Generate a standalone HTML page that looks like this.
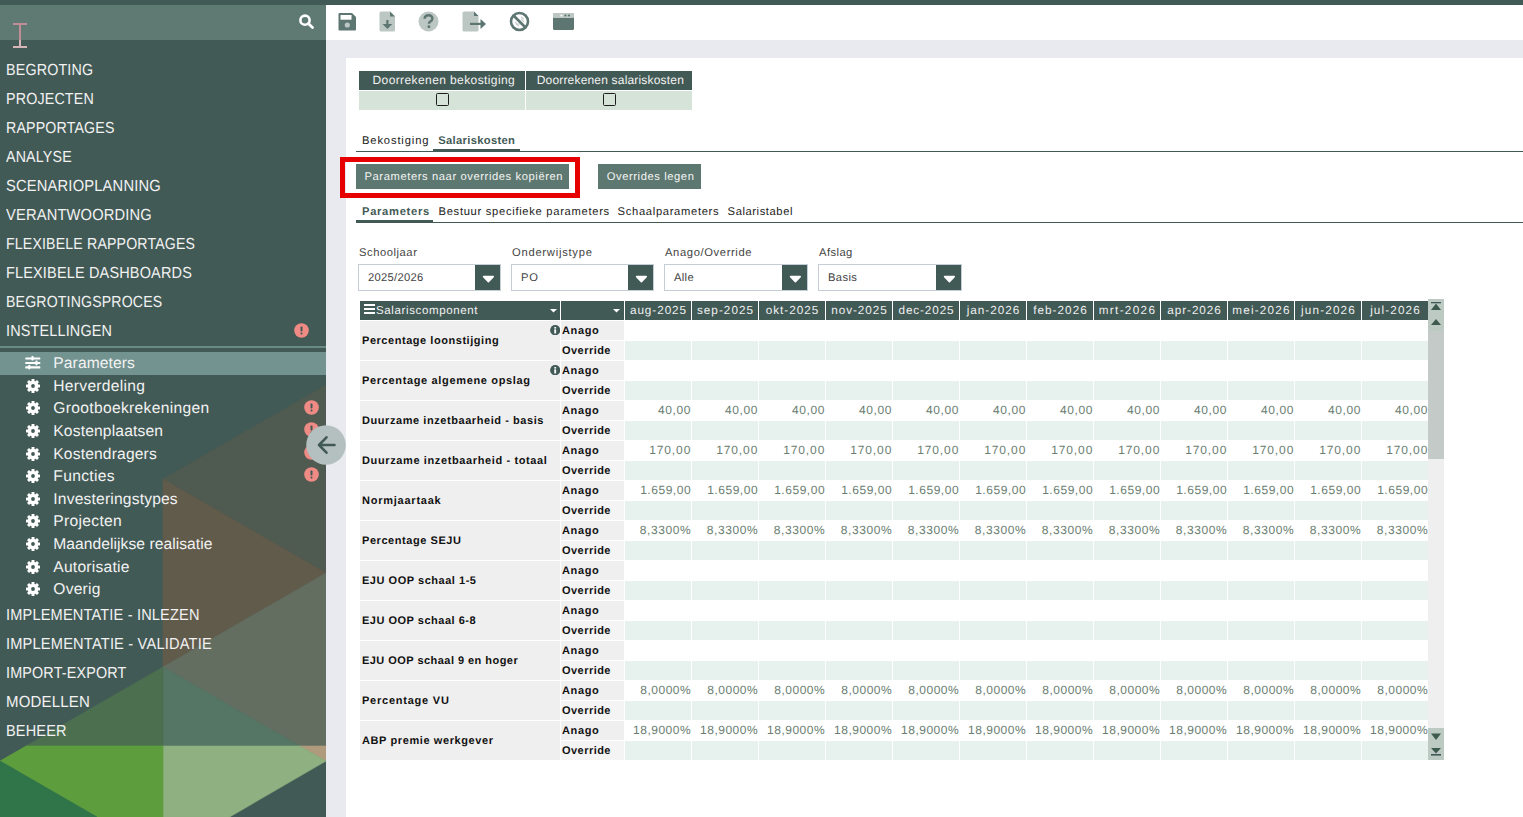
<!DOCTYPE html><html><head><meta charset="utf-8"><style>
*{box-sizing:border-box;margin:0;padding:0}
html,body{width:1523px;height:817px;overflow:hidden;background:#fff;font-family:"Liberation Sans",sans-serif}
.a{position:absolute}
.t{position:absolute;white-space:nowrap;font-family:"Liberation Sans",sans-serif;text-rendering:geometricPrecision}
</style></head><body>
<div class="a" style="left:0;top:0;width:326px;height:817px;background:#425a56"></div>
<svg class="a" style="left:0;top:0" width="326" height="817" viewBox="0 0 326 817">
<polygon points="163,479 326,385 326,573" fill="#4f5b50" stroke="#4f5b50" stroke-width="0.6"/>
<polygon points="163,479 326,573 163,667" fill="#615b4c" stroke="#615b4c" stroke-width="0.6"/>
<polygon points="326,573 326,746 300,746 163,667" fill="#636e61" stroke="#636e61" stroke-width="0.6"/>
<polygon points="163,667 300,746 163,746" fill="#557565" stroke="#557565" stroke-width="0.6"/>
<polygon points="300,746 326,746 326,761" fill="#b09a7c" stroke="#b09a7c" stroke-width="0.6"/>
<polygon points="163,746 300,746 326,761 229.6,817 163,817" fill="#8fb080" stroke="#8fb080" stroke-width="0.6"/>
<polygon points="163,667 163,746 26,746" fill="#4b6f4f" stroke="#4b6f4f" stroke-width="0.6"/>
<polygon points="26,746 163,746 163,817 97,817 0,761" fill="#5e9d3d" stroke="#5e9d3d" stroke-width="0.6"/>
<polygon points="0,761 97,817 0,817" fill="#307549" stroke="#307549" stroke-width="0.6"/>
</svg>
<div class="a" style="left:0;top:0;width:1523px;height:5px;background:#425a56"></div>
<div class="a" style="left:0;top:5px;width:326px;height:35px;background:#5e7a73"></div>
<svg class="a" style="left:296px;top:11px" width="20" height="20" viewBox="0 0 20 20"><circle cx="9" cy="9.2" r="4.6" fill="none" stroke="#fff" stroke-width="2.6"/><line x1="12.3" y1="12.5" x2="16.5" y2="16.6" stroke="#fff" stroke-width="2.8" stroke-linecap="round"/></svg>
<div class="t" style="left:6.00px;top:63.46px;font-size:16px;line-height:16px;color:#f2f2f2;font-weight:400;letter-spacing:0.2px;;transform:scaleX(0.8917);transform-origin:0 0">BEGROTING</div>
<div class="t" style="left:6.00px;top:92.46px;font-size:16px;line-height:16px;color:#f2f2f2;font-weight:400;letter-spacing:0.2px;;transform:scaleX(0.8906);transform-origin:0 0">PROJECTEN</div>
<div class="t" style="left:6.00px;top:121.46px;font-size:16px;line-height:16px;color:#f2f2f2;font-weight:400;letter-spacing:0.2px;;transform:scaleX(0.8860);transform-origin:0 0">RAPPORTAGES</div>
<div class="t" style="left:6.00px;top:150.46px;font-size:16px;line-height:16px;color:#f2f2f2;font-weight:400;letter-spacing:0.2px;;transform:scaleX(0.8890);transform-origin:0 0">ANALYSE</div>
<div class="t" style="left:6.00px;top:179.46px;font-size:16px;line-height:16px;color:#f2f2f2;font-weight:400;letter-spacing:0.2px;;transform:scaleX(0.9187);transform-origin:0 0">SCENARIOPLANNING</div>
<div class="t" style="left:6.00px;top:208.46px;font-size:16px;line-height:16px;color:#f2f2f2;font-weight:400;letter-spacing:0.2px;;transform:scaleX(0.9158);transform-origin:0 0">VERANTWOORDING</div>
<div class="t" style="left:6.00px;top:237.46px;font-size:16px;line-height:16px;color:#f2f2f2;font-weight:400;letter-spacing:0.2px;;transform:scaleX(0.8826);transform-origin:0 0">FLEXIBELE RAPPORTAGES</div>
<div class="t" style="left:6.00px;top:266.46px;font-size:16px;line-height:16px;color:#f2f2f2;font-weight:400;letter-spacing:0.2px;;transform:scaleX(0.9034);transform-origin:0 0">FLEXIBELE DASHBOARDS</div>
<div class="t" style="left:6.00px;top:295.46px;font-size:16px;line-height:16px;color:#f2f2f2;font-weight:400;letter-spacing:0.2px;;transform:scaleX(0.8812);transform-origin:0 0">BEGROTINGSPROCES</div>
<div class="t" style="left:6.00px;top:324.46px;font-size:16px;line-height:16px;color:#f2f2f2;font-weight:400;letter-spacing:0.2px;;transform:scaleX(0.9000);transform-origin:0 0">INSTELLINGEN</div>
<div class="a" style="left:0;top:346px;width:326px;height:2px;background:#6a8a85"></div>
<div class="a" style="left:0;top:352px;width:326px;height:23px;background:#729390"></div>
<div class="t" style="left:53.30px;top:356.29px;font-size:15.6px;line-height:15.6px;color:#f2f2f2;font-weight:400;letter-spacing:0.111px;">Parameters</div>
<svg class="a" style="left:25px;top:355.5px" width="16" height="14" viewBox="0 0 16 14"><g fill="#fff"><rect x="0.3" y="1.4" width="15" height="2.2" rx="0.6"/><rect x="0.3" y="5.9" width="15" height="2.2" rx="0.6"/><rect x="0.3" y="10.3" width="15" height="2.2" rx="0.6"/><rect x="6.4" y="0" width="2.2" height="4.6" rx="0.8"/><rect x="10.4" y="4.6" width="2.2" height="4.6" rx="0.8"/><rect x="3.2" y="9" width="2.2" height="4.4" rx="0.8"/></g></svg>
<div class="t" style="left:53.30px;top:378.89px;font-size:15.6px;line-height:15.6px;color:#f2f2f2;font-weight:400;letter-spacing:0.291px;">Herverdeling</div>
<svg class="a" style="left:25.8px;top:378.7px" width="14" height="14" viewBox="-7 -7 14 14"><g fill="#fff"><rect x="-1.5" y="-7" width="3" height="3" rx="0.5" transform="rotate(0)"/><rect x="-1.5" y="-7" width="3" height="3" rx="0.5" transform="rotate(45)"/><rect x="-1.5" y="-7" width="3" height="3" rx="0.5" transform="rotate(90)"/><rect x="-1.5" y="-7" width="3" height="3" rx="0.5" transform="rotate(135)"/><rect x="-1.5" y="-7" width="3" height="3" rx="0.5" transform="rotate(180)"/><rect x="-1.5" y="-7" width="3" height="3" rx="0.5" transform="rotate(225)"/><rect x="-1.5" y="-7" width="3" height="3" rx="0.5" transform="rotate(270)"/><rect x="-1.5" y="-7" width="3" height="3" rx="0.5" transform="rotate(315)"/><circle r="5.3"/></g><circle r="1.9" fill="#425a56"/></svg>
<div class="t" style="left:53.30px;top:401.49px;font-size:15.6px;line-height:15.6px;color:#f2f2f2;font-weight:400;letter-spacing:0.322px;">Grootboekrekeningen</div>
<svg class="a" style="left:25.8px;top:401.3px" width="14" height="14" viewBox="-7 -7 14 14"><g fill="#fff"><rect x="-1.5" y="-7" width="3" height="3" rx="0.5" transform="rotate(0)"/><rect x="-1.5" y="-7" width="3" height="3" rx="0.5" transform="rotate(45)"/><rect x="-1.5" y="-7" width="3" height="3" rx="0.5" transform="rotate(90)"/><rect x="-1.5" y="-7" width="3" height="3" rx="0.5" transform="rotate(135)"/><rect x="-1.5" y="-7" width="3" height="3" rx="0.5" transform="rotate(180)"/><rect x="-1.5" y="-7" width="3" height="3" rx="0.5" transform="rotate(225)"/><rect x="-1.5" y="-7" width="3" height="3" rx="0.5" transform="rotate(270)"/><rect x="-1.5" y="-7" width="3" height="3" rx="0.5" transform="rotate(315)"/><circle r="5.3"/></g><circle r="1.9" fill="#425a56"/></svg>
<div class="t" style="left:53.30px;top:424.09px;font-size:15.6px;line-height:15.6px;color:#f2f2f2;font-weight:400;letter-spacing:0.169px;">Kostenplaatsen</div>
<svg class="a" style="left:25.8px;top:423.9px" width="14" height="14" viewBox="-7 -7 14 14"><g fill="#fff"><rect x="-1.5" y="-7" width="3" height="3" rx="0.5" transform="rotate(0)"/><rect x="-1.5" y="-7" width="3" height="3" rx="0.5" transform="rotate(45)"/><rect x="-1.5" y="-7" width="3" height="3" rx="0.5" transform="rotate(90)"/><rect x="-1.5" y="-7" width="3" height="3" rx="0.5" transform="rotate(135)"/><rect x="-1.5" y="-7" width="3" height="3" rx="0.5" transform="rotate(180)"/><rect x="-1.5" y="-7" width="3" height="3" rx="0.5" transform="rotate(225)"/><rect x="-1.5" y="-7" width="3" height="3" rx="0.5" transform="rotate(270)"/><rect x="-1.5" y="-7" width="3" height="3" rx="0.5" transform="rotate(315)"/><circle r="5.3"/></g><circle r="1.9" fill="#425a56"/></svg>
<div class="t" style="left:53.30px;top:446.69px;font-size:15.6px;line-height:15.6px;color:#f2f2f2;font-weight:400;letter-spacing:0.167px;">Kostendragers</div>
<svg class="a" style="left:25.8px;top:446.5px" width="14" height="14" viewBox="-7 -7 14 14"><g fill="#fff"><rect x="-1.5" y="-7" width="3" height="3" rx="0.5" transform="rotate(0)"/><rect x="-1.5" y="-7" width="3" height="3" rx="0.5" transform="rotate(45)"/><rect x="-1.5" y="-7" width="3" height="3" rx="0.5" transform="rotate(90)"/><rect x="-1.5" y="-7" width="3" height="3" rx="0.5" transform="rotate(135)"/><rect x="-1.5" y="-7" width="3" height="3" rx="0.5" transform="rotate(180)"/><rect x="-1.5" y="-7" width="3" height="3" rx="0.5" transform="rotate(225)"/><rect x="-1.5" y="-7" width="3" height="3" rx="0.5" transform="rotate(270)"/><rect x="-1.5" y="-7" width="3" height="3" rx="0.5" transform="rotate(315)"/><circle r="5.3"/></g><circle r="1.9" fill="#425a56"/></svg>
<div class="t" style="left:53.30px;top:469.29px;font-size:15.6px;line-height:15.6px;color:#f2f2f2;font-weight:400;letter-spacing:0.343px;">Functies</div>
<svg class="a" style="left:25.8px;top:469.1px" width="14" height="14" viewBox="-7 -7 14 14"><g fill="#fff"><rect x="-1.5" y="-7" width="3" height="3" rx="0.5" transform="rotate(0)"/><rect x="-1.5" y="-7" width="3" height="3" rx="0.5" transform="rotate(45)"/><rect x="-1.5" y="-7" width="3" height="3" rx="0.5" transform="rotate(90)"/><rect x="-1.5" y="-7" width="3" height="3" rx="0.5" transform="rotate(135)"/><rect x="-1.5" y="-7" width="3" height="3" rx="0.5" transform="rotate(180)"/><rect x="-1.5" y="-7" width="3" height="3" rx="0.5" transform="rotate(225)"/><rect x="-1.5" y="-7" width="3" height="3" rx="0.5" transform="rotate(270)"/><rect x="-1.5" y="-7" width="3" height="3" rx="0.5" transform="rotate(315)"/><circle r="5.3"/></g><circle r="1.9" fill="#425a56"/></svg>
<div class="t" style="left:53.30px;top:491.89px;font-size:15.6px;line-height:15.6px;color:#f2f2f2;font-weight:400;letter-spacing:0.188px;">Investeringstypes</div>
<svg class="a" style="left:25.8px;top:491.7px" width="14" height="14" viewBox="-7 -7 14 14"><g fill="#fff"><rect x="-1.5" y="-7" width="3" height="3" rx="0.5" transform="rotate(0)"/><rect x="-1.5" y="-7" width="3" height="3" rx="0.5" transform="rotate(45)"/><rect x="-1.5" y="-7" width="3" height="3" rx="0.5" transform="rotate(90)"/><rect x="-1.5" y="-7" width="3" height="3" rx="0.5" transform="rotate(135)"/><rect x="-1.5" y="-7" width="3" height="3" rx="0.5" transform="rotate(180)"/><rect x="-1.5" y="-7" width="3" height="3" rx="0.5" transform="rotate(225)"/><rect x="-1.5" y="-7" width="3" height="3" rx="0.5" transform="rotate(270)"/><rect x="-1.5" y="-7" width="3" height="3" rx="0.5" transform="rotate(315)"/><circle r="5.3"/></g><circle r="1.9" fill="#425a56"/></svg>
<div class="t" style="left:53.30px;top:514.49px;font-size:15.6px;line-height:15.6px;color:#f2f2f2;font-weight:400;letter-spacing:0.325px;">Projecten</div>
<svg class="a" style="left:25.8px;top:514.3px" width="14" height="14" viewBox="-7 -7 14 14"><g fill="#fff"><rect x="-1.5" y="-7" width="3" height="3" rx="0.5" transform="rotate(0)"/><rect x="-1.5" y="-7" width="3" height="3" rx="0.5" transform="rotate(45)"/><rect x="-1.5" y="-7" width="3" height="3" rx="0.5" transform="rotate(90)"/><rect x="-1.5" y="-7" width="3" height="3" rx="0.5" transform="rotate(135)"/><rect x="-1.5" y="-7" width="3" height="3" rx="0.5" transform="rotate(180)"/><rect x="-1.5" y="-7" width="3" height="3" rx="0.5" transform="rotate(225)"/><rect x="-1.5" y="-7" width="3" height="3" rx="0.5" transform="rotate(270)"/><rect x="-1.5" y="-7" width="3" height="3" rx="0.5" transform="rotate(315)"/><circle r="5.3"/></g><circle r="1.9" fill="#425a56"/></svg>
<div class="t" style="left:53.30px;top:537.09px;font-size:15.6px;line-height:15.6px;color:#f2f2f2;font-weight:400;letter-spacing:0.064px;">Maandelijkse realisatie</div>
<svg class="a" style="left:25.8px;top:536.9px" width="14" height="14" viewBox="-7 -7 14 14"><g fill="#fff"><rect x="-1.5" y="-7" width="3" height="3" rx="0.5" transform="rotate(0)"/><rect x="-1.5" y="-7" width="3" height="3" rx="0.5" transform="rotate(45)"/><rect x="-1.5" y="-7" width="3" height="3" rx="0.5" transform="rotate(90)"/><rect x="-1.5" y="-7" width="3" height="3" rx="0.5" transform="rotate(135)"/><rect x="-1.5" y="-7" width="3" height="3" rx="0.5" transform="rotate(180)"/><rect x="-1.5" y="-7" width="3" height="3" rx="0.5" transform="rotate(225)"/><rect x="-1.5" y="-7" width="3" height="3" rx="0.5" transform="rotate(270)"/><rect x="-1.5" y="-7" width="3" height="3" rx="0.5" transform="rotate(315)"/><circle r="5.3"/></g><circle r="1.9" fill="#425a56"/></svg>
<div class="t" style="left:53.30px;top:559.69px;font-size:15.6px;line-height:15.6px;color:#f2f2f2;font-weight:400;letter-spacing:0.24px;">Autorisatie</div>
<svg class="a" style="left:25.8px;top:559.5px" width="14" height="14" viewBox="-7 -7 14 14"><g fill="#fff"><rect x="-1.5" y="-7" width="3" height="3" rx="0.5" transform="rotate(0)"/><rect x="-1.5" y="-7" width="3" height="3" rx="0.5" transform="rotate(45)"/><rect x="-1.5" y="-7" width="3" height="3" rx="0.5" transform="rotate(90)"/><rect x="-1.5" y="-7" width="3" height="3" rx="0.5" transform="rotate(135)"/><rect x="-1.5" y="-7" width="3" height="3" rx="0.5" transform="rotate(180)"/><rect x="-1.5" y="-7" width="3" height="3" rx="0.5" transform="rotate(225)"/><rect x="-1.5" y="-7" width="3" height="3" rx="0.5" transform="rotate(270)"/><rect x="-1.5" y="-7" width="3" height="3" rx="0.5" transform="rotate(315)"/><circle r="5.3"/></g><circle r="1.9" fill="#425a56"/></svg>
<div class="t" style="left:53.30px;top:582.29px;font-size:15.6px;line-height:15.6px;color:#f2f2f2;font-weight:400;letter-spacing:0.24px;">Overig</div>
<svg class="a" style="left:25.8px;top:582.1px" width="14" height="14" viewBox="-7 -7 14 14"><g fill="#fff"><rect x="-1.5" y="-7" width="3" height="3" rx="0.5" transform="rotate(0)"/><rect x="-1.5" y="-7" width="3" height="3" rx="0.5" transform="rotate(45)"/><rect x="-1.5" y="-7" width="3" height="3" rx="0.5" transform="rotate(90)"/><rect x="-1.5" y="-7" width="3" height="3" rx="0.5" transform="rotate(135)"/><rect x="-1.5" y="-7" width="3" height="3" rx="0.5" transform="rotate(180)"/><rect x="-1.5" y="-7" width="3" height="3" rx="0.5" transform="rotate(225)"/><rect x="-1.5" y="-7" width="3" height="3" rx="0.5" transform="rotate(270)"/><rect x="-1.5" y="-7" width="3" height="3" rx="0.5" transform="rotate(315)"/><circle r="5.3"/></g><circle r="1.9" fill="#425a56"/></svg>
<svg class="a" style="left:293.8px;top:322.7px" width="15" height="15" viewBox="0 0 15 15"><circle cx="7.5" cy="7.5" r="7.3" fill="#ef8a85"/><rect x="6.5" y="3.5" width="2" height="5" rx="0.8" fill="#425a56"/><rect x="6.5" y="9.6" width="2" height="2" rx="0.8" fill="#425a56"/></svg>
<svg class="a" style="left:303.8px;top:399.8px" width="15" height="15" viewBox="0 0 15 15"><circle cx="7.5" cy="7.5" r="7.3" fill="#ef8a85"/><rect x="6.5" y="3.5" width="2" height="5" rx="0.8" fill="#425a56"/><rect x="6.5" y="9.6" width="2" height="2" rx="0.8" fill="#425a56"/></svg>
<svg class="a" style="left:303.8px;top:422.3px" width="15" height="15" viewBox="0 0 15 15"><circle cx="7.5" cy="7.5" r="7.3" fill="#ef8a85"/><rect x="6.5" y="3.5" width="2" height="5" rx="0.8" fill="#425a56"/><rect x="6.5" y="9.6" width="2" height="2" rx="0.8" fill="#425a56"/></svg>
<svg class="a" style="left:303.8px;top:445.2px" width="15" height="15" viewBox="0 0 15 15"><circle cx="7.5" cy="7.5" r="7.3" fill="#ef8a85"/><rect x="6.5" y="3.5" width="2" height="5" rx="0.8" fill="#425a56"/><rect x="6.5" y="9.6" width="2" height="2" rx="0.8" fill="#425a56"/></svg>
<svg class="a" style="left:303.8px;top:467.1px" width="15" height="15" viewBox="0 0 15 15"><circle cx="7.5" cy="7.5" r="7.3" fill="#ef8a85"/><rect x="6.5" y="3.5" width="2" height="5" rx="0.8" fill="#425a56"/><rect x="6.5" y="9.6" width="2" height="2" rx="0.8" fill="#425a56"/></svg>
<div class="t" style="left:6.00px;top:608.46px;font-size:16px;line-height:16px;color:#f2f2f2;font-weight:400;letter-spacing:0.2px;;transform:scaleX(0.9095);transform-origin:0 0">IMPLEMENTATIE - INLEZEN</div>
<div class="t" style="left:6.00px;top:637.46px;font-size:16px;line-height:16px;color:#f2f2f2;font-weight:400;letter-spacing:0.2px;;transform:scaleX(0.9143);transform-origin:0 0">IMPLEMENTATIE - VALIDATIE</div>
<div class="t" style="left:6.00px;top:666.46px;font-size:16px;line-height:16px;color:#f2f2f2;font-weight:400;letter-spacing:0.2px;;transform:scaleX(0.8962);transform-origin:0 0">IMPORT-EXPORT</div>
<div class="t" style="left:6.00px;top:695.46px;font-size:16px;line-height:16px;color:#f2f2f2;font-weight:400;letter-spacing:0.2px;;transform:scaleX(0.9379);transform-origin:0 0">MODELLEN</div>
<div class="t" style="left:6.00px;top:724.46px;font-size:16px;line-height:16px;color:#f2f2f2;font-weight:400;letter-spacing:0.2px;;transform:scaleX(0.9062);transform-origin:0 0">BEHEER</div>
<div class="a" style="left:326px;top:40px;width:1197px;height:777px;background:#e9eaef"></div>
<div class="a" style="left:346px;top:58px;width:1177px;height:759px;background:#fff"></div>
<svg class="a" style="left:306px;top:425px" width="40" height="40" viewBox="0 0 40 40"><circle cx="20" cy="20" r="19.8" fill="#b4c0bf"/><path d="M13 20 H28.5 M20.5 12.3 L13 20 L20.5 27.7" fill="none" stroke="#425a56" stroke-width="2.6" stroke-linecap="round" stroke-linejoin="round"/></svg>
<div class="a" style="left:13px;top:23px;width:14px;height:2px;background:#bf8d95"></div>
<div class="a" style="left:19px;top:25px;width:2px;height:15px;background:#bf8d95"></div>
<div class="a" style="left:19px;top:40px;width:2px;height:6px;background:#d6b4b7"></div>
<div class="a" style="left:13px;top:46px;width:14px;height:2px;background:#d6b4b7"></div>
<svg class="a" style="left:338px;top:12px" width="19" height="19" viewBox="0 0 19 19"><path d="M1.5 1 H14 L18 5 V17.5 Q18 18.5 17 18.5 H1.5 Q0.5 18.5 0.5 17.5 V2 Q0.5 1 1.5 1 Z" fill="#5d7671"/><rect x="2.5" y="3" width="11" height="4.7" fill="#fff"/><circle cx="9.3" cy="13" r="2.6" fill="#bcc7c4"/></svg>
<svg class="a" style="left:379px;top:11px" width="17" height="21" viewBox="0 0 17 21"><path d="M2 0.5 H11 L16 5.5 V19 Q16 20.5 14.5 20.5 H2 Q0.5 20.5 0.5 19 V2 Q0.5 0.5 2 0.5Z" fill="#bcc7c4"/><path d="M11 0.5 L16 5.5 H11Z" fill="#5d7671"/><rect x="7.3" y="9" width="2.2" height="6" fill="#5d7671"/><path d="M3.5 13 H13.3 L8.4 18Z" fill="#5d7671"/></svg>
<svg class="a" style="left:418px;top:11px" width="21" height="21" viewBox="0 0 21 21"><circle cx="10.5" cy="10.5" r="10" fill="#bcc7c4"/><path d="M6.6 7.8 Q6.8 4.3 10.6 4.3 Q14.4 4.3 14.4 7.6 Q14.4 9.6 12.2 10.6 Q11 11.2 11 12.8" fill="none" stroke="#5d7671" stroke-width="2.4"/><rect x="9.6" y="14.4" width="2.6" height="2.6" fill="#5d7671"/></svg>
<svg class="a" style="left:462px;top:11px" width="25" height="21" viewBox="0 0 25 21"><path d="M2 0.5 H12 L16.5 5 V19 Q16.5 20.5 15 20.5 H2 Q0.5 20.5 0.5 19 V2 Q0.5 0.5 2 0.5Z" fill="#bcc7c4"/><path d="M12 0.5 L16.5 5 H12Z" fill="#5d7671"/><rect x="8" y="11.8" width="12" height="2.2" fill="#5d7671"/><path d="M18.5 8 L24 13 L18.5 18Z" fill="#5d7671"/></svg>
<svg class="a" style="left:509px;top:11px" width="21" height="21" viewBox="0 0 21 21"><g stroke="#c8cfcc" stroke-width="1.2"><path d="M12 6 L15 8 M7 13 L10 15 M12 8 L15 11 M6 11 L9 14 M8 13 L14 13"/></g><circle cx="10.5" cy="10.5" r="8.5" fill="none" stroke="#5d7671" stroke-width="2.6"/><line x1="4.5" y1="4.5" x2="16.5" y2="16.5" stroke="#5d7671" stroke-width="2.6"/></svg>
<svg class="a" style="left:553px;top:13px" width="21" height="17" viewBox="0 0 21 17"><rect x="0" y="0" width="21" height="17" rx="1.5" fill="#5d7671"/><rect x="0" y="0" width="21" height="5" rx="1" fill="#bcc7c4"/><circle cx="8.5" cy="2.5" r="1.1" fill="#fff"/><circle cx="12.5" cy="2.5" r="1.1" fill="#5d7671"/><circle cx="16" cy="2.5" r="1.1" fill="#5d7671"/></svg>
<div class="a" style="left:359px;top:71px;width:166px;height:18.5px;background:#425a56"></div>
<div class="a" style="left:526px;top:71px;width:166px;height:18.5px;background:#425a56"></div>
<div class="a" style="left:359px;top:91px;width:166px;height:19px;background:#d5e3d9"></div>
<div class="a" style="left:526px;top:91px;width:166px;height:19px;background:#d5e3d9"></div>
<div class="t" style="left:372.50px;top:74.04px;font-size:12px;line-height:12px;color:#f2f2f2;font-weight:400;letter-spacing:0.4px;">Doorrekenen bekostiging</div>
<div class="t" style="left:536.70px;top:74.04px;font-size:12px;line-height:12px;color:#f2f2f2;font-weight:400;letter-spacing:0.183px;">Doorrekenen salariskosten</div>
<div class="a" style="left:436px;top:93px;width:13px;height:13px;border:1.4px solid #1e1e1e;border-radius:1.5px"></div>
<div class="a" style="left:603px;top:93px;width:13px;height:13px;border:1.4px solid #1e1e1e;border-radius:1.5px"></div>
<div class="t" style="left:362.00px;top:136.02px;font-size:11.2px;line-height:11.2px;color:#222;font-weight:400;letter-spacing:0.86px;">Bekostiging</div>
<div class="t" style="left:438.20px;top:136.02px;font-size:11.2px;line-height:11.2px;color:#425a56;font-weight:700;letter-spacing:0.333px;">Salariskosten</div>
<div class="a" style="left:356px;top:151px;width:1167px;height:1px;background:#425a56"></div>
<div class="a" style="left:433px;top:149px;width:87px;height:3px;background:#425a56"></div>
<div class="a" style="left:340px;top:157px;width:240px;height:41px;border:5px solid #e60000"></div>
<div class="a" style="left:356px;top:164px;width:213px;height:25px;background:#5d7870"></div>
<div class="t" style="left:364.50px;top:171.52px;font-size:11.2px;line-height:11.2px;color:#f4f4f4;font-weight:400;letter-spacing:0.594px;">Parameters naar overrides kopiëren</div>
<div class="a" style="left:598px;top:164px;width:103px;height:25px;background:#5d7870"></div>
<div class="t" style="left:606.70px;top:171.52px;font-size:11.2px;line-height:11.2px;color:#f4f4f4;font-weight:400;letter-spacing:0.586px;">Overrides legen</div>
<div class="t" style="left:362.00px;top:207.02px;font-size:11.2px;line-height:11.2px;color:#425a56;font-weight:700;letter-spacing:0.689px;">Parameters</div>
<div class="t" style="left:438.50px;top:207.02px;font-size:11.2px;line-height:11.2px;color:#222;font-weight:400;letter-spacing:0.7px;">Bestuur specifieke parameters</div>
<div class="t" style="left:617.60px;top:207.02px;font-size:11.2px;line-height:11.2px;color:#222;font-weight:400;letter-spacing:0.68px;">Schaalparameters</div>
<div class="t" style="left:727.60px;top:207.02px;font-size:11.2px;line-height:11.2px;color:#222;font-weight:400;letter-spacing:0.582px;">Salaristabel</div>
<div class="a" style="left:356px;top:222px;width:1167px;height:1px;background:#425a56"></div>
<div class="a" style="left:356px;top:220px;width:77px;height:3px;background:#425a56"></div>
<div class="t" style="left:359.00px;top:247.52px;font-size:11.2px;line-height:11.2px;color:#444;font-weight:400;letter-spacing:0.556px;">Schooljaar</div>
<div class="a" style="left:358px;top:264px;width:143px;height:27px;border:1px solid #c5ced6;background:#fff"></div>
<div class="a" style="left:475px;top:265px;width:25px;height:25px;background:#425a56"></div>
<svg class="a" style="left:481.5px;top:274.5px" width="13" height="9" viewBox="0 0 13 9"><path d="M1.6 1.6 H11.2 L6.4 6.6Z" fill="#fff" stroke="#fff" stroke-width="1.6" stroke-linejoin="round"/></svg>
<div class="t" style="left:368.00px;top:273.02px;font-size:11.2px;line-height:11.2px;color:#444;font-weight:400;letter-spacing:0.3px;">2025/2026</div>
<div class="t" style="left:512.00px;top:247.52px;font-size:11.2px;line-height:11.2px;color:#444;font-weight:400;letter-spacing:0.75px;">Onderwijstype</div>
<div class="a" style="left:511px;top:264px;width:143px;height:27px;border:1px solid #c5ced6;background:#fff"></div>
<div class="a" style="left:628px;top:265px;width:25px;height:25px;background:#425a56"></div>
<svg class="a" style="left:634.5px;top:274.5px" width="13" height="9" viewBox="0 0 13 9"><path d="M1.6 1.6 H11.2 L6.4 6.6Z" fill="#fff" stroke="#fff" stroke-width="1.6" stroke-linejoin="round"/></svg>
<div class="t" style="left:521.00px;top:273.02px;font-size:11.2px;line-height:11.2px;color:#444;font-weight:400;letter-spacing:0.8px;">PO</div>
<div class="t" style="left:665.00px;top:247.52px;font-size:11.2px;line-height:11.2px;color:#444;font-weight:400;letter-spacing:0.631px;">Anago/Override</div>
<div class="a" style="left:664px;top:264px;width:144px;height:27px;border:1px solid #c5ced6;background:#fff"></div>
<div class="a" style="left:782px;top:265px;width:25px;height:25px;background:#425a56"></div>
<svg class="a" style="left:788.5px;top:274.5px" width="13" height="9" viewBox="0 0 13 9"><path d="M1.6 1.6 H11.2 L6.4 6.6Z" fill="#fff" stroke="#fff" stroke-width="1.6" stroke-linejoin="round"/></svg>
<div class="t" style="left:674.00px;top:273.02px;font-size:11.2px;line-height:11.2px;color:#444;font-weight:400;letter-spacing:0.333px;">Alle</div>
<div class="t" style="left:819.00px;top:247.52px;font-size:11.2px;line-height:11.2px;color:#444;font-weight:400;letter-spacing:0.44px;">Afslag</div>
<div class="a" style="left:818px;top:264px;width:144px;height:27px;border:1px solid #c5ced6;background:#fff"></div>
<div class="a" style="left:936px;top:265px;width:25px;height:25px;background:#425a56"></div>
<svg class="a" style="left:942.5px;top:274.5px" width="13" height="9" viewBox="0 0 13 9"><path d="M1.6 1.6 H11.2 L6.4 6.6Z" fill="#fff" stroke="#fff" stroke-width="1.6" stroke-linejoin="round"/></svg>
<div class="t" style="left:828.00px;top:273.02px;font-size:11.2px;line-height:11.2px;color:#444;font-weight:400;letter-spacing:0.4px;">Basis</div>
<div class="a" style="left:360px;top:301px;width:200px;height:19px;background:#425a56"></div>
<div class="a" style="left:561px;top:301px;width:63px;height:19px;background:#425a56"></div>
<svg class="a" style="left:364px;top:304px" width="11" height="10" viewBox="0 0 11 10"><rect y="0" width="11" height="2" fill="#fff"/><rect y="4" width="11" height="2" fill="#fff"/><rect y="8" width="11" height="2" fill="#fff"/></svg>
<div class="t" style="left:376.00px;top:305.77px;font-size:11.5px;line-height:11.5px;color:#f2f2f2;font-weight:400;letter-spacing:0.627px;">Salariscomponent</div>
<svg class="a" style="left:549.5px;top:309px" width="7" height="4" viewBox="0 0 7 4"><path d="M0 0 H7 L3.5 3.5Z" fill="#fff"/></svg>
<svg class="a" style="left:613.2px;top:309px" width="7" height="4" viewBox="0 0 7 4"><path d="M0 0 H7 L3.5 3.5Z" fill="#fff"/></svg>
<div class="a" style="left:625px;top:301px;width:66px;height:19px;background:#425a56"></div>
<div class="a" style="left:692px;top:301px;width:66px;height:19px;background:#425a56"></div>
<div class="a" style="left:759px;top:301px;width:66px;height:19px;background:#425a56"></div>
<div class="a" style="left:826px;top:301px;width:66px;height:19px;background:#425a56"></div>
<div class="a" style="left:893px;top:301px;width:66px;height:19px;background:#425a56"></div>
<div class="a" style="left:960px;top:301px;width:66px;height:19px;background:#425a56"></div>
<div class="a" style="left:1027px;top:301px;width:66px;height:19px;background:#425a56"></div>
<div class="a" style="left:1094px;top:301px;width:66px;height:19px;background:#425a56"></div>
<div class="a" style="left:1161px;top:301px;width:66px;height:19px;background:#425a56"></div>
<div class="a" style="left:1228px;top:301px;width:66px;height:19px;background:#425a56"></div>
<div class="a" style="left:1295px;top:301px;width:66px;height:19px;background:#425a56"></div>
<div class="a" style="left:1362px;top:301px;width:66px;height:19px;background:#425a56"></div>
<div class="t" style="left:625.50px;top:304.70px;font-size:11.7px;line-height:11.7px;color:#f0f0f0;font-weight:400;letter-spacing:0.971px;width:66px;text-align:center">aug-2025</div>
<div class="t" style="left:692.50px;top:304.70px;font-size:11.7px;line-height:11.7px;color:#f0f0f0;font-weight:400;letter-spacing:1.057px;width:66px;text-align:center">sep-2025</div>
<div class="t" style="left:759.50px;top:304.70px;font-size:11.7px;line-height:11.7px;color:#f0f0f0;font-weight:400;letter-spacing:1.0px;width:66px;text-align:center">okt-2025</div>
<div class="t" style="left:826.50px;top:304.70px;font-size:11.7px;line-height:11.7px;color:#f0f0f0;font-weight:400;letter-spacing:0.943px;width:66px;text-align:center">nov-2025</div>
<div class="t" style="left:893.50px;top:304.70px;font-size:11.7px;line-height:11.7px;color:#f0f0f0;font-weight:400;letter-spacing:0.886px;width:66px;text-align:center">dec-2025</div>
<div class="t" style="left:960.50px;top:304.70px;font-size:11.7px;line-height:11.7px;color:#f0f0f0;font-weight:400;letter-spacing:1.0px;width:66px;text-align:center">jan-2026</div>
<div class="t" style="left:1027.50px;top:304.70px;font-size:11.7px;line-height:11.7px;color:#f0f0f0;font-weight:400;letter-spacing:1.057px;width:66px;text-align:center">feb-2026</div>
<div class="t" style="left:1094.50px;top:304.70px;font-size:11.7px;line-height:11.7px;color:#f0f0f0;font-weight:400;letter-spacing:1.343px;width:66px;text-align:center">mrt-2026</div>
<div class="t" style="left:1161.50px;top:304.70px;font-size:11.7px;line-height:11.7px;color:#f0f0f0;font-weight:400;letter-spacing:0.971px;width:66px;text-align:center">apr-2026</div>
<div class="t" style="left:1228.50px;top:304.70px;font-size:11.7px;line-height:11.7px;color:#f0f0f0;font-weight:400;letter-spacing:1.229px;width:66px;text-align:center">mei-2026</div>
<div class="t" style="left:1295.50px;top:304.70px;font-size:11.7px;line-height:11.7px;color:#f0f0f0;font-weight:400;letter-spacing:1.171px;width:66px;text-align:center">jun-2026</div>
<div class="t" style="left:1362.50px;top:304.70px;font-size:11.7px;line-height:11.7px;color:#f0f0f0;font-weight:400;letter-spacing:1.143px;width:66px;text-align:center">jul-2026</div>
<div class="a" style="left:360px;top:321px;width:200px;height:39px;background:#efefef"></div>
<div class="a" style="left:561px;top:321px;width:63px;height:19px;background:#efefef"></div>
<div class="a" style="left:561px;top:341px;width:63px;height:19px;background:#f4f4f4"></div>
<div class="t" style="left:362.00px;top:336.29px;font-size:11px;line-height:11px;color:#111;font-weight:700;letter-spacing:0.545px;">Percentage loonstijging</div>
<div class="t" style="left:562.00px;top:325.59px;font-size:11px;line-height:11px;color:#111;font-weight:700;letter-spacing:0.65px;">Anago</div>
<div class="t" style="left:562.00px;top:345.59px;font-size:11px;line-height:11px;color:#111;font-weight:700;letter-spacing:0.457px;">Override</div>
<svg class="a" style="left:549.6px;top:324.6px" width="10.4" height="10.4" viewBox="0 0 10.4 10.4"><circle cx="5.2" cy="5.2" r="5.1" fill="#425a56"/><rect x="4.3" y="2" width="1.8" height="1.6" fill="#fff"/><rect x="4.3" y="4.3" width="1.8" height="4.2" fill="#fff"/></svg>
<div class="a" style="left:625px;top:341px;width:66px;height:19px;background:#e7f1ed"></div>
<div class="a" style="left:692px;top:341px;width:66px;height:19px;background:#e7f1ed"></div>
<div class="a" style="left:759px;top:341px;width:66px;height:19px;background:#e7f1ed"></div>
<div class="a" style="left:826px;top:341px;width:66px;height:19px;background:#e7f1ed"></div>
<div class="a" style="left:893px;top:341px;width:66px;height:19px;background:#e7f1ed"></div>
<div class="a" style="left:960px;top:341px;width:66px;height:19px;background:#e7f1ed"></div>
<div class="a" style="left:1027px;top:341px;width:66px;height:19px;background:#e7f1ed"></div>
<div class="a" style="left:1094px;top:341px;width:66px;height:19px;background:#e7f1ed"></div>
<div class="a" style="left:1161px;top:341px;width:66px;height:19px;background:#e7f1ed"></div>
<div class="a" style="left:1228px;top:341px;width:66px;height:19px;background:#e7f1ed"></div>
<div class="a" style="left:1295px;top:341px;width:66px;height:19px;background:#e7f1ed"></div>
<div class="a" style="left:1362px;top:341px;width:66px;height:19px;background:#e7f1ed"></div>
<div class="a" style="left:360px;top:361px;width:200px;height:39px;background:#efefef"></div>
<div class="a" style="left:561px;top:361px;width:63px;height:19px;background:#efefef"></div>
<div class="a" style="left:561px;top:381px;width:63px;height:19px;background:#f4f4f4"></div>
<div class="t" style="left:362.00px;top:376.29px;font-size:11px;line-height:11px;color:#111;font-weight:700;letter-spacing:0.656px;">Percentage algemene opslag</div>
<div class="t" style="left:562.00px;top:365.59px;font-size:11px;line-height:11px;color:#111;font-weight:700;letter-spacing:0.65px;">Anago</div>
<div class="t" style="left:562.00px;top:385.59px;font-size:11px;line-height:11px;color:#111;font-weight:700;letter-spacing:0.457px;">Override</div>
<svg class="a" style="left:549.6px;top:364.6px" width="10.4" height="10.4" viewBox="0 0 10.4 10.4"><circle cx="5.2" cy="5.2" r="5.1" fill="#425a56"/><rect x="4.3" y="2" width="1.8" height="1.6" fill="#fff"/><rect x="4.3" y="4.3" width="1.8" height="4.2" fill="#fff"/></svg>
<div class="a" style="left:625px;top:381px;width:66px;height:19px;background:#e7f1ed"></div>
<div class="a" style="left:692px;top:381px;width:66px;height:19px;background:#e7f1ed"></div>
<div class="a" style="left:759px;top:381px;width:66px;height:19px;background:#e7f1ed"></div>
<div class="a" style="left:826px;top:381px;width:66px;height:19px;background:#e7f1ed"></div>
<div class="a" style="left:893px;top:381px;width:66px;height:19px;background:#e7f1ed"></div>
<div class="a" style="left:960px;top:381px;width:66px;height:19px;background:#e7f1ed"></div>
<div class="a" style="left:1027px;top:381px;width:66px;height:19px;background:#e7f1ed"></div>
<div class="a" style="left:1094px;top:381px;width:66px;height:19px;background:#e7f1ed"></div>
<div class="a" style="left:1161px;top:381px;width:66px;height:19px;background:#e7f1ed"></div>
<div class="a" style="left:1228px;top:381px;width:66px;height:19px;background:#e7f1ed"></div>
<div class="a" style="left:1295px;top:381px;width:66px;height:19px;background:#e7f1ed"></div>
<div class="a" style="left:1362px;top:381px;width:66px;height:19px;background:#e7f1ed"></div>
<div class="a" style="left:360px;top:401px;width:200px;height:39px;background:#efefef"></div>
<div class="a" style="left:561px;top:401px;width:63px;height:19px;background:#efefef"></div>
<div class="a" style="left:561px;top:421px;width:63px;height:19px;background:#f4f4f4"></div>
<div class="t" style="left:362.00px;top:416.29px;font-size:11px;line-height:11px;color:#111;font-weight:700;letter-spacing:0.566px;">Duurzame inzetbaarheid - basis</div>
<div class="t" style="left:562.00px;top:405.59px;font-size:11px;line-height:11px;color:#111;font-weight:700;letter-spacing:0.65px;">Anago</div>
<div class="t" style="left:562.00px;top:425.59px;font-size:11px;line-height:11px;color:#111;font-weight:700;letter-spacing:0.457px;">Override</div>
<div class="a" style="left:625px;top:421px;width:66px;height:19px;background:#e7f1ed"></div>
<div class="t" style="left:625.20px;top:403.84px;font-size:12px;line-height:12px;color:#697d70;font-weight:400;letter-spacing:0.65px;width:66px;text-align:right">40,00</div>
<div class="a" style="left:692px;top:421px;width:66px;height:19px;background:#e7f1ed"></div>
<div class="t" style="left:692.20px;top:403.84px;font-size:12px;line-height:12px;color:#697d70;font-weight:400;letter-spacing:0.65px;width:66px;text-align:right">40,00</div>
<div class="a" style="left:759px;top:421px;width:66px;height:19px;background:#e7f1ed"></div>
<div class="t" style="left:759.20px;top:403.84px;font-size:12px;line-height:12px;color:#697d70;font-weight:400;letter-spacing:0.65px;width:66px;text-align:right">40,00</div>
<div class="a" style="left:826px;top:421px;width:66px;height:19px;background:#e7f1ed"></div>
<div class="t" style="left:826.20px;top:403.84px;font-size:12px;line-height:12px;color:#697d70;font-weight:400;letter-spacing:0.65px;width:66px;text-align:right">40,00</div>
<div class="a" style="left:893px;top:421px;width:66px;height:19px;background:#e7f1ed"></div>
<div class="t" style="left:893.20px;top:403.84px;font-size:12px;line-height:12px;color:#697d70;font-weight:400;letter-spacing:0.65px;width:66px;text-align:right">40,00</div>
<div class="a" style="left:960px;top:421px;width:66px;height:19px;background:#e7f1ed"></div>
<div class="t" style="left:960.20px;top:403.84px;font-size:12px;line-height:12px;color:#697d70;font-weight:400;letter-spacing:0.65px;width:66px;text-align:right">40,00</div>
<div class="a" style="left:1027px;top:421px;width:66px;height:19px;background:#e7f1ed"></div>
<div class="t" style="left:1027.20px;top:403.84px;font-size:12px;line-height:12px;color:#697d70;font-weight:400;letter-spacing:0.65px;width:66px;text-align:right">40,00</div>
<div class="a" style="left:1094px;top:421px;width:66px;height:19px;background:#e7f1ed"></div>
<div class="t" style="left:1094.20px;top:403.84px;font-size:12px;line-height:12px;color:#697d70;font-weight:400;letter-spacing:0.65px;width:66px;text-align:right">40,00</div>
<div class="a" style="left:1161px;top:421px;width:66px;height:19px;background:#e7f1ed"></div>
<div class="t" style="left:1161.20px;top:403.84px;font-size:12px;line-height:12px;color:#697d70;font-weight:400;letter-spacing:0.65px;width:66px;text-align:right">40,00</div>
<div class="a" style="left:1228px;top:421px;width:66px;height:19px;background:#e7f1ed"></div>
<div class="t" style="left:1228.20px;top:403.84px;font-size:12px;line-height:12px;color:#697d70;font-weight:400;letter-spacing:0.65px;width:66px;text-align:right">40,00</div>
<div class="a" style="left:1295px;top:421px;width:66px;height:19px;background:#e7f1ed"></div>
<div class="t" style="left:1295.20px;top:403.84px;font-size:12px;line-height:12px;color:#697d70;font-weight:400;letter-spacing:0.65px;width:66px;text-align:right">40,00</div>
<div class="a" style="left:1362px;top:421px;width:66px;height:19px;background:#e7f1ed"></div>
<div class="t" style="left:1362.20px;top:403.84px;font-size:12px;line-height:12px;color:#697d70;font-weight:400;letter-spacing:0.65px;width:66px;text-align:right">40,00</div>
<div class="a" style="left:360px;top:441px;width:200px;height:39px;background:#efefef"></div>
<div class="a" style="left:561px;top:441px;width:63px;height:19px;background:#efefef"></div>
<div class="a" style="left:561px;top:461px;width:63px;height:19px;background:#f4f4f4"></div>
<div class="t" style="left:362.00px;top:456.29px;font-size:11px;line-height:11px;color:#111;font-weight:700;letter-spacing:0.62px;">Duurzame inzetbaarheid - totaal</div>
<div class="t" style="left:562.00px;top:445.59px;font-size:11px;line-height:11px;color:#111;font-weight:700;letter-spacing:0.65px;">Anago</div>
<div class="t" style="left:562.00px;top:465.59px;font-size:11px;line-height:11px;color:#111;font-weight:700;letter-spacing:0.457px;">Override</div>
<div class="a" style="left:625px;top:461px;width:66px;height:19px;background:#e7f1ed"></div>
<div class="t" style="left:625.20px;top:443.84px;font-size:12px;line-height:12px;color:#697d70;font-weight:400;letter-spacing:0.88px;width:66px;text-align:right">170,00</div>
<div class="a" style="left:692px;top:461px;width:66px;height:19px;background:#e7f1ed"></div>
<div class="t" style="left:692.20px;top:443.84px;font-size:12px;line-height:12px;color:#697d70;font-weight:400;letter-spacing:0.88px;width:66px;text-align:right">170,00</div>
<div class="a" style="left:759px;top:461px;width:66px;height:19px;background:#e7f1ed"></div>
<div class="t" style="left:759.20px;top:443.84px;font-size:12px;line-height:12px;color:#697d70;font-weight:400;letter-spacing:0.88px;width:66px;text-align:right">170,00</div>
<div class="a" style="left:826px;top:461px;width:66px;height:19px;background:#e7f1ed"></div>
<div class="t" style="left:826.20px;top:443.84px;font-size:12px;line-height:12px;color:#697d70;font-weight:400;letter-spacing:0.88px;width:66px;text-align:right">170,00</div>
<div class="a" style="left:893px;top:461px;width:66px;height:19px;background:#e7f1ed"></div>
<div class="t" style="left:893.20px;top:443.84px;font-size:12px;line-height:12px;color:#697d70;font-weight:400;letter-spacing:0.88px;width:66px;text-align:right">170,00</div>
<div class="a" style="left:960px;top:461px;width:66px;height:19px;background:#e7f1ed"></div>
<div class="t" style="left:960.20px;top:443.84px;font-size:12px;line-height:12px;color:#697d70;font-weight:400;letter-spacing:0.88px;width:66px;text-align:right">170,00</div>
<div class="a" style="left:1027px;top:461px;width:66px;height:19px;background:#e7f1ed"></div>
<div class="t" style="left:1027.20px;top:443.84px;font-size:12px;line-height:12px;color:#697d70;font-weight:400;letter-spacing:0.88px;width:66px;text-align:right">170,00</div>
<div class="a" style="left:1094px;top:461px;width:66px;height:19px;background:#e7f1ed"></div>
<div class="t" style="left:1094.20px;top:443.84px;font-size:12px;line-height:12px;color:#697d70;font-weight:400;letter-spacing:0.88px;width:66px;text-align:right">170,00</div>
<div class="a" style="left:1161px;top:461px;width:66px;height:19px;background:#e7f1ed"></div>
<div class="t" style="left:1161.20px;top:443.84px;font-size:12px;line-height:12px;color:#697d70;font-weight:400;letter-spacing:0.88px;width:66px;text-align:right">170,00</div>
<div class="a" style="left:1228px;top:461px;width:66px;height:19px;background:#e7f1ed"></div>
<div class="t" style="left:1228.20px;top:443.84px;font-size:12px;line-height:12px;color:#697d70;font-weight:400;letter-spacing:0.88px;width:66px;text-align:right">170,00</div>
<div class="a" style="left:1295px;top:461px;width:66px;height:19px;background:#e7f1ed"></div>
<div class="t" style="left:1295.20px;top:443.84px;font-size:12px;line-height:12px;color:#697d70;font-weight:400;letter-spacing:0.88px;width:66px;text-align:right">170,00</div>
<div class="a" style="left:1362px;top:461px;width:66px;height:19px;background:#e7f1ed"></div>
<div class="t" style="left:1362.20px;top:443.84px;font-size:12px;line-height:12px;color:#697d70;font-weight:400;letter-spacing:0.88px;width:66px;text-align:right">170,00</div>
<div class="a" style="left:360px;top:481px;width:200px;height:39px;background:#efefef"></div>
<div class="a" style="left:561px;top:481px;width:63px;height:19px;background:#efefef"></div>
<div class="a" style="left:561px;top:501px;width:63px;height:19px;background:#f4f4f4"></div>
<div class="t" style="left:362.00px;top:496.29px;font-size:11px;line-height:11px;color:#111;font-weight:700;letter-spacing:0.764px;">Normjaartaak</div>
<div class="t" style="left:562.00px;top:485.59px;font-size:11px;line-height:11px;color:#111;font-weight:700;letter-spacing:0.65px;">Anago</div>
<div class="t" style="left:562.00px;top:505.59px;font-size:11px;line-height:11px;color:#111;font-weight:700;letter-spacing:0.457px;">Override</div>
<div class="a" style="left:625px;top:501px;width:66px;height:19px;background:#e7f1ed"></div>
<div class="t" style="left:625.20px;top:483.84px;font-size:12px;line-height:12px;color:#697d70;font-weight:400;letter-spacing:0.543px;width:66px;text-align:right">1.659,00</div>
<div class="a" style="left:692px;top:501px;width:66px;height:19px;background:#e7f1ed"></div>
<div class="t" style="left:692.20px;top:483.84px;font-size:12px;line-height:12px;color:#697d70;font-weight:400;letter-spacing:0.543px;width:66px;text-align:right">1.659,00</div>
<div class="a" style="left:759px;top:501px;width:66px;height:19px;background:#e7f1ed"></div>
<div class="t" style="left:759.20px;top:483.84px;font-size:12px;line-height:12px;color:#697d70;font-weight:400;letter-spacing:0.543px;width:66px;text-align:right">1.659,00</div>
<div class="a" style="left:826px;top:501px;width:66px;height:19px;background:#e7f1ed"></div>
<div class="t" style="left:826.20px;top:483.84px;font-size:12px;line-height:12px;color:#697d70;font-weight:400;letter-spacing:0.543px;width:66px;text-align:right">1.659,00</div>
<div class="a" style="left:893px;top:501px;width:66px;height:19px;background:#e7f1ed"></div>
<div class="t" style="left:893.20px;top:483.84px;font-size:12px;line-height:12px;color:#697d70;font-weight:400;letter-spacing:0.543px;width:66px;text-align:right">1.659,00</div>
<div class="a" style="left:960px;top:501px;width:66px;height:19px;background:#e7f1ed"></div>
<div class="t" style="left:960.20px;top:483.84px;font-size:12px;line-height:12px;color:#697d70;font-weight:400;letter-spacing:0.543px;width:66px;text-align:right">1.659,00</div>
<div class="a" style="left:1027px;top:501px;width:66px;height:19px;background:#e7f1ed"></div>
<div class="t" style="left:1027.20px;top:483.84px;font-size:12px;line-height:12px;color:#697d70;font-weight:400;letter-spacing:0.543px;width:66px;text-align:right">1.659,00</div>
<div class="a" style="left:1094px;top:501px;width:66px;height:19px;background:#e7f1ed"></div>
<div class="t" style="left:1094.20px;top:483.84px;font-size:12px;line-height:12px;color:#697d70;font-weight:400;letter-spacing:0.543px;width:66px;text-align:right">1.659,00</div>
<div class="a" style="left:1161px;top:501px;width:66px;height:19px;background:#e7f1ed"></div>
<div class="t" style="left:1161.20px;top:483.84px;font-size:12px;line-height:12px;color:#697d70;font-weight:400;letter-spacing:0.543px;width:66px;text-align:right">1.659,00</div>
<div class="a" style="left:1228px;top:501px;width:66px;height:19px;background:#e7f1ed"></div>
<div class="t" style="left:1228.20px;top:483.84px;font-size:12px;line-height:12px;color:#697d70;font-weight:400;letter-spacing:0.543px;width:66px;text-align:right">1.659,00</div>
<div class="a" style="left:1295px;top:501px;width:66px;height:19px;background:#e7f1ed"></div>
<div class="t" style="left:1295.20px;top:483.84px;font-size:12px;line-height:12px;color:#697d70;font-weight:400;letter-spacing:0.543px;width:66px;text-align:right">1.659,00</div>
<div class="a" style="left:1362px;top:501px;width:66px;height:19px;background:#e7f1ed"></div>
<div class="t" style="left:1362.20px;top:483.84px;font-size:12px;line-height:12px;color:#697d70;font-weight:400;letter-spacing:0.543px;width:66px;text-align:right">1.659,00</div>
<div class="a" style="left:360px;top:521px;width:200px;height:39px;background:#efefef"></div>
<div class="a" style="left:561px;top:521px;width:63px;height:19px;background:#efefef"></div>
<div class="a" style="left:561px;top:541px;width:63px;height:19px;background:#f4f4f4"></div>
<div class="t" style="left:362.00px;top:536.29px;font-size:11px;line-height:11px;color:#111;font-weight:700;letter-spacing:0.557px;">Percentage SEJU</div>
<div class="t" style="left:562.00px;top:525.59px;font-size:11px;line-height:11px;color:#111;font-weight:700;letter-spacing:0.65px;">Anago</div>
<div class="t" style="left:562.00px;top:545.59px;font-size:11px;line-height:11px;color:#111;font-weight:700;letter-spacing:0.457px;">Override</div>
<div class="a" style="left:625px;top:541px;width:66px;height:19px;background:#e7f1ed"></div>
<div class="t" style="left:625.20px;top:523.84px;font-size:12px;line-height:12px;color:#697d70;font-weight:400;letter-spacing:0.567px;width:66px;text-align:right">8,3300%</div>
<div class="a" style="left:692px;top:541px;width:66px;height:19px;background:#e7f1ed"></div>
<div class="t" style="left:692.20px;top:523.84px;font-size:12px;line-height:12px;color:#697d70;font-weight:400;letter-spacing:0.567px;width:66px;text-align:right">8,3300%</div>
<div class="a" style="left:759px;top:541px;width:66px;height:19px;background:#e7f1ed"></div>
<div class="t" style="left:759.20px;top:523.84px;font-size:12px;line-height:12px;color:#697d70;font-weight:400;letter-spacing:0.567px;width:66px;text-align:right">8,3300%</div>
<div class="a" style="left:826px;top:541px;width:66px;height:19px;background:#e7f1ed"></div>
<div class="t" style="left:826.20px;top:523.84px;font-size:12px;line-height:12px;color:#697d70;font-weight:400;letter-spacing:0.567px;width:66px;text-align:right">8,3300%</div>
<div class="a" style="left:893px;top:541px;width:66px;height:19px;background:#e7f1ed"></div>
<div class="t" style="left:893.20px;top:523.84px;font-size:12px;line-height:12px;color:#697d70;font-weight:400;letter-spacing:0.567px;width:66px;text-align:right">8,3300%</div>
<div class="a" style="left:960px;top:541px;width:66px;height:19px;background:#e7f1ed"></div>
<div class="t" style="left:960.20px;top:523.84px;font-size:12px;line-height:12px;color:#697d70;font-weight:400;letter-spacing:0.567px;width:66px;text-align:right">8,3300%</div>
<div class="a" style="left:1027px;top:541px;width:66px;height:19px;background:#e7f1ed"></div>
<div class="t" style="left:1027.20px;top:523.84px;font-size:12px;line-height:12px;color:#697d70;font-weight:400;letter-spacing:0.567px;width:66px;text-align:right">8,3300%</div>
<div class="a" style="left:1094px;top:541px;width:66px;height:19px;background:#e7f1ed"></div>
<div class="t" style="left:1094.20px;top:523.84px;font-size:12px;line-height:12px;color:#697d70;font-weight:400;letter-spacing:0.567px;width:66px;text-align:right">8,3300%</div>
<div class="a" style="left:1161px;top:541px;width:66px;height:19px;background:#e7f1ed"></div>
<div class="t" style="left:1161.20px;top:523.84px;font-size:12px;line-height:12px;color:#697d70;font-weight:400;letter-spacing:0.567px;width:66px;text-align:right">8,3300%</div>
<div class="a" style="left:1228px;top:541px;width:66px;height:19px;background:#e7f1ed"></div>
<div class="t" style="left:1228.20px;top:523.84px;font-size:12px;line-height:12px;color:#697d70;font-weight:400;letter-spacing:0.567px;width:66px;text-align:right">8,3300%</div>
<div class="a" style="left:1295px;top:541px;width:66px;height:19px;background:#e7f1ed"></div>
<div class="t" style="left:1295.20px;top:523.84px;font-size:12px;line-height:12px;color:#697d70;font-weight:400;letter-spacing:0.567px;width:66px;text-align:right">8,3300%</div>
<div class="a" style="left:1362px;top:541px;width:66px;height:19px;background:#e7f1ed"></div>
<div class="t" style="left:1362.20px;top:523.84px;font-size:12px;line-height:12px;color:#697d70;font-weight:400;letter-spacing:0.567px;width:66px;text-align:right">8,3300%</div>
<div class="a" style="left:360px;top:561px;width:200px;height:39px;background:#efefef"></div>
<div class="a" style="left:561px;top:561px;width:63px;height:19px;background:#efefef"></div>
<div class="a" style="left:561px;top:581px;width:63px;height:19px;background:#f4f4f4"></div>
<div class="t" style="left:362.00px;top:576.29px;font-size:11px;line-height:11px;color:#111;font-weight:700;letter-spacing:0.529px;">EJU OOP schaal 1-5</div>
<div class="t" style="left:562.00px;top:565.59px;font-size:11px;line-height:11px;color:#111;font-weight:700;letter-spacing:0.65px;">Anago</div>
<div class="t" style="left:562.00px;top:585.59px;font-size:11px;line-height:11px;color:#111;font-weight:700;letter-spacing:0.457px;">Override</div>
<div class="a" style="left:625px;top:581px;width:66px;height:19px;background:#e7f1ed"></div>
<div class="a" style="left:692px;top:581px;width:66px;height:19px;background:#e7f1ed"></div>
<div class="a" style="left:759px;top:581px;width:66px;height:19px;background:#e7f1ed"></div>
<div class="a" style="left:826px;top:581px;width:66px;height:19px;background:#e7f1ed"></div>
<div class="a" style="left:893px;top:581px;width:66px;height:19px;background:#e7f1ed"></div>
<div class="a" style="left:960px;top:581px;width:66px;height:19px;background:#e7f1ed"></div>
<div class="a" style="left:1027px;top:581px;width:66px;height:19px;background:#e7f1ed"></div>
<div class="a" style="left:1094px;top:581px;width:66px;height:19px;background:#e7f1ed"></div>
<div class="a" style="left:1161px;top:581px;width:66px;height:19px;background:#e7f1ed"></div>
<div class="a" style="left:1228px;top:581px;width:66px;height:19px;background:#e7f1ed"></div>
<div class="a" style="left:1295px;top:581px;width:66px;height:19px;background:#e7f1ed"></div>
<div class="a" style="left:1362px;top:581px;width:66px;height:19px;background:#e7f1ed"></div>
<div class="a" style="left:360px;top:601px;width:200px;height:39px;background:#efefef"></div>
<div class="a" style="left:561px;top:601px;width:63px;height:19px;background:#efefef"></div>
<div class="a" style="left:561px;top:621px;width:63px;height:19px;background:#f4f4f4"></div>
<div class="t" style="left:362.00px;top:616.29px;font-size:11px;line-height:11px;color:#111;font-weight:700;letter-spacing:0.506px;">EJU OOP schaal 6-8</div>
<div class="t" style="left:562.00px;top:605.59px;font-size:11px;line-height:11px;color:#111;font-weight:700;letter-spacing:0.65px;">Anago</div>
<div class="t" style="left:562.00px;top:625.59px;font-size:11px;line-height:11px;color:#111;font-weight:700;letter-spacing:0.457px;">Override</div>
<div class="a" style="left:625px;top:621px;width:66px;height:19px;background:#e7f1ed"></div>
<div class="a" style="left:692px;top:621px;width:66px;height:19px;background:#e7f1ed"></div>
<div class="a" style="left:759px;top:621px;width:66px;height:19px;background:#e7f1ed"></div>
<div class="a" style="left:826px;top:621px;width:66px;height:19px;background:#e7f1ed"></div>
<div class="a" style="left:893px;top:621px;width:66px;height:19px;background:#e7f1ed"></div>
<div class="a" style="left:960px;top:621px;width:66px;height:19px;background:#e7f1ed"></div>
<div class="a" style="left:1027px;top:621px;width:66px;height:19px;background:#e7f1ed"></div>
<div class="a" style="left:1094px;top:621px;width:66px;height:19px;background:#e7f1ed"></div>
<div class="a" style="left:1161px;top:621px;width:66px;height:19px;background:#e7f1ed"></div>
<div class="a" style="left:1228px;top:621px;width:66px;height:19px;background:#e7f1ed"></div>
<div class="a" style="left:1295px;top:621px;width:66px;height:19px;background:#e7f1ed"></div>
<div class="a" style="left:1362px;top:621px;width:66px;height:19px;background:#e7f1ed"></div>
<div class="a" style="left:360px;top:641px;width:200px;height:39px;background:#efefef"></div>
<div class="a" style="left:561px;top:641px;width:63px;height:19px;background:#efefef"></div>
<div class="a" style="left:561px;top:661px;width:63px;height:19px;background:#f4f4f4"></div>
<div class="t" style="left:362.00px;top:656.29px;font-size:11px;line-height:11px;color:#111;font-weight:700;letter-spacing:0.458px;">EJU OOP schaal 9 en hoger</div>
<div class="t" style="left:562.00px;top:645.59px;font-size:11px;line-height:11px;color:#111;font-weight:700;letter-spacing:0.65px;">Anago</div>
<div class="t" style="left:562.00px;top:665.59px;font-size:11px;line-height:11px;color:#111;font-weight:700;letter-spacing:0.457px;">Override</div>
<div class="a" style="left:625px;top:661px;width:66px;height:19px;background:#e7f1ed"></div>
<div class="a" style="left:692px;top:661px;width:66px;height:19px;background:#e7f1ed"></div>
<div class="a" style="left:759px;top:661px;width:66px;height:19px;background:#e7f1ed"></div>
<div class="a" style="left:826px;top:661px;width:66px;height:19px;background:#e7f1ed"></div>
<div class="a" style="left:893px;top:661px;width:66px;height:19px;background:#e7f1ed"></div>
<div class="a" style="left:960px;top:661px;width:66px;height:19px;background:#e7f1ed"></div>
<div class="a" style="left:1027px;top:661px;width:66px;height:19px;background:#e7f1ed"></div>
<div class="a" style="left:1094px;top:661px;width:66px;height:19px;background:#e7f1ed"></div>
<div class="a" style="left:1161px;top:661px;width:66px;height:19px;background:#e7f1ed"></div>
<div class="a" style="left:1228px;top:661px;width:66px;height:19px;background:#e7f1ed"></div>
<div class="a" style="left:1295px;top:661px;width:66px;height:19px;background:#e7f1ed"></div>
<div class="a" style="left:1362px;top:661px;width:66px;height:19px;background:#e7f1ed"></div>
<div class="a" style="left:360px;top:681px;width:200px;height:39px;background:#efefef"></div>
<div class="a" style="left:561px;top:681px;width:63px;height:19px;background:#efefef"></div>
<div class="a" style="left:561px;top:701px;width:63px;height:19px;background:#f4f4f4"></div>
<div class="t" style="left:362.00px;top:696.29px;font-size:11px;line-height:11px;color:#111;font-weight:700;letter-spacing:0.767px;">Percentage VU</div>
<div class="t" style="left:562.00px;top:685.59px;font-size:11px;line-height:11px;color:#111;font-weight:700;letter-spacing:0.65px;">Anago</div>
<div class="t" style="left:562.00px;top:705.59px;font-size:11px;line-height:11px;color:#111;font-weight:700;letter-spacing:0.457px;">Override</div>
<div class="a" style="left:625px;top:701px;width:66px;height:19px;background:#e7f1ed"></div>
<div class="t" style="left:625.20px;top:683.84px;font-size:12px;line-height:12px;color:#697d70;font-weight:400;letter-spacing:0.5px;width:66px;text-align:right">8,0000%</div>
<div class="a" style="left:692px;top:701px;width:66px;height:19px;background:#e7f1ed"></div>
<div class="t" style="left:692.20px;top:683.84px;font-size:12px;line-height:12px;color:#697d70;font-weight:400;letter-spacing:0.5px;width:66px;text-align:right">8,0000%</div>
<div class="a" style="left:759px;top:701px;width:66px;height:19px;background:#e7f1ed"></div>
<div class="t" style="left:759.20px;top:683.84px;font-size:12px;line-height:12px;color:#697d70;font-weight:400;letter-spacing:0.5px;width:66px;text-align:right">8,0000%</div>
<div class="a" style="left:826px;top:701px;width:66px;height:19px;background:#e7f1ed"></div>
<div class="t" style="left:826.20px;top:683.84px;font-size:12px;line-height:12px;color:#697d70;font-weight:400;letter-spacing:0.5px;width:66px;text-align:right">8,0000%</div>
<div class="a" style="left:893px;top:701px;width:66px;height:19px;background:#e7f1ed"></div>
<div class="t" style="left:893.20px;top:683.84px;font-size:12px;line-height:12px;color:#697d70;font-weight:400;letter-spacing:0.5px;width:66px;text-align:right">8,0000%</div>
<div class="a" style="left:960px;top:701px;width:66px;height:19px;background:#e7f1ed"></div>
<div class="t" style="left:960.20px;top:683.84px;font-size:12px;line-height:12px;color:#697d70;font-weight:400;letter-spacing:0.5px;width:66px;text-align:right">8,0000%</div>
<div class="a" style="left:1027px;top:701px;width:66px;height:19px;background:#e7f1ed"></div>
<div class="t" style="left:1027.20px;top:683.84px;font-size:12px;line-height:12px;color:#697d70;font-weight:400;letter-spacing:0.5px;width:66px;text-align:right">8,0000%</div>
<div class="a" style="left:1094px;top:701px;width:66px;height:19px;background:#e7f1ed"></div>
<div class="t" style="left:1094.20px;top:683.84px;font-size:12px;line-height:12px;color:#697d70;font-weight:400;letter-spacing:0.5px;width:66px;text-align:right">8,0000%</div>
<div class="a" style="left:1161px;top:701px;width:66px;height:19px;background:#e7f1ed"></div>
<div class="t" style="left:1161.20px;top:683.84px;font-size:12px;line-height:12px;color:#697d70;font-weight:400;letter-spacing:0.5px;width:66px;text-align:right">8,0000%</div>
<div class="a" style="left:1228px;top:701px;width:66px;height:19px;background:#e7f1ed"></div>
<div class="t" style="left:1228.20px;top:683.84px;font-size:12px;line-height:12px;color:#697d70;font-weight:400;letter-spacing:0.5px;width:66px;text-align:right">8,0000%</div>
<div class="a" style="left:1295px;top:701px;width:66px;height:19px;background:#e7f1ed"></div>
<div class="t" style="left:1295.20px;top:683.84px;font-size:12px;line-height:12px;color:#697d70;font-weight:400;letter-spacing:0.5px;width:66px;text-align:right">8,0000%</div>
<div class="a" style="left:1362px;top:701px;width:66px;height:19px;background:#e7f1ed"></div>
<div class="t" style="left:1362.20px;top:683.84px;font-size:12px;line-height:12px;color:#697d70;font-weight:400;letter-spacing:0.5px;width:66px;text-align:right">8,0000%</div>
<div class="a" style="left:360px;top:721px;width:200px;height:39px;background:#efefef"></div>
<div class="a" style="left:561px;top:721px;width:63px;height:19px;background:#efefef"></div>
<div class="a" style="left:561px;top:741px;width:63px;height:19px;background:#f4f4f4"></div>
<div class="t" style="left:362.00px;top:736.29px;font-size:11px;line-height:11px;color:#111;font-weight:700;letter-spacing:0.6px;">ABP premie werkgever</div>
<div class="t" style="left:562.00px;top:725.59px;font-size:11px;line-height:11px;color:#111;font-weight:700;letter-spacing:0.65px;">Anago</div>
<div class="t" style="left:562.00px;top:745.59px;font-size:11px;line-height:11px;color:#111;font-weight:700;letter-spacing:0.457px;">Override</div>
<div class="a" style="left:625px;top:741px;width:66px;height:19px;background:#e7f1ed"></div>
<div class="t" style="left:625.20px;top:723.84px;font-size:12px;line-height:12px;color:#697d70;font-weight:400;letter-spacing:0.514px;width:66px;text-align:right">18,9000%</div>
<div class="a" style="left:692px;top:741px;width:66px;height:19px;background:#e7f1ed"></div>
<div class="t" style="left:692.20px;top:723.84px;font-size:12px;line-height:12px;color:#697d70;font-weight:400;letter-spacing:0.514px;width:66px;text-align:right">18,9000%</div>
<div class="a" style="left:759px;top:741px;width:66px;height:19px;background:#e7f1ed"></div>
<div class="t" style="left:759.20px;top:723.84px;font-size:12px;line-height:12px;color:#697d70;font-weight:400;letter-spacing:0.514px;width:66px;text-align:right">18,9000%</div>
<div class="a" style="left:826px;top:741px;width:66px;height:19px;background:#e7f1ed"></div>
<div class="t" style="left:826.20px;top:723.84px;font-size:12px;line-height:12px;color:#697d70;font-weight:400;letter-spacing:0.514px;width:66px;text-align:right">18,9000%</div>
<div class="a" style="left:893px;top:741px;width:66px;height:19px;background:#e7f1ed"></div>
<div class="t" style="left:893.20px;top:723.84px;font-size:12px;line-height:12px;color:#697d70;font-weight:400;letter-spacing:0.514px;width:66px;text-align:right">18,9000%</div>
<div class="a" style="left:960px;top:741px;width:66px;height:19px;background:#e7f1ed"></div>
<div class="t" style="left:960.20px;top:723.84px;font-size:12px;line-height:12px;color:#697d70;font-weight:400;letter-spacing:0.514px;width:66px;text-align:right">18,9000%</div>
<div class="a" style="left:1027px;top:741px;width:66px;height:19px;background:#e7f1ed"></div>
<div class="t" style="left:1027.20px;top:723.84px;font-size:12px;line-height:12px;color:#697d70;font-weight:400;letter-spacing:0.514px;width:66px;text-align:right">18,9000%</div>
<div class="a" style="left:1094px;top:741px;width:66px;height:19px;background:#e7f1ed"></div>
<div class="t" style="left:1094.20px;top:723.84px;font-size:12px;line-height:12px;color:#697d70;font-weight:400;letter-spacing:0.514px;width:66px;text-align:right">18,9000%</div>
<div class="a" style="left:1161px;top:741px;width:66px;height:19px;background:#e7f1ed"></div>
<div class="t" style="left:1161.20px;top:723.84px;font-size:12px;line-height:12px;color:#697d70;font-weight:400;letter-spacing:0.514px;width:66px;text-align:right">18,9000%</div>
<div class="a" style="left:1228px;top:741px;width:66px;height:19px;background:#e7f1ed"></div>
<div class="t" style="left:1228.20px;top:723.84px;font-size:12px;line-height:12px;color:#697d70;font-weight:400;letter-spacing:0.514px;width:66px;text-align:right">18,9000%</div>
<div class="a" style="left:1295px;top:741px;width:66px;height:19px;background:#e7f1ed"></div>
<div class="t" style="left:1295.20px;top:723.84px;font-size:12px;line-height:12px;color:#697d70;font-weight:400;letter-spacing:0.514px;width:66px;text-align:right">18,9000%</div>
<div class="a" style="left:1362px;top:741px;width:66px;height:19px;background:#e7f1ed"></div>
<div class="t" style="left:1362.20px;top:723.84px;font-size:12px;line-height:12px;color:#697d70;font-weight:400;letter-spacing:0.514px;width:66px;text-align:right">18,9000%</div>
<div class="a" style="left:1428px;top:299px;width:16px;height:461px;background:#efefef"></div>
<div class="a" style="left:1428px;top:299px;width:16px;height:32px;background:#bdc9c3"></div>
<div class="a" style="left:1428px;top:331px;width:16px;height:128px;background:#c3cac8"></div>
<div class="a" style="left:1428px;top:728px;width:16px;height:32px;background:#bdc9c3"></div>
<svg class="a" style="left:1428px;top:299px" width="16" height="32" viewBox="0 0 16 32"><rect x="3" y="3" width="10" height="1.3" fill="#425a56"/><path d="M3 11 L8 4.5 L13 11Z" fill="#3e5a50"/><path d="M3 26 L8 20 L13 26Z" fill="#3e5a50"/></svg>
<svg class="a" style="left:1428px;top:728px" width="16" height="32" viewBox="0 0 16 32"><path d="M3 5.5 L13 5.5 L8 12Z" fill="#3e5a50"/><path d="M3 20 L13 20 L8 25.5Z" fill="#3e5a50"/><rect x="3" y="26" width="10" height="1.6" fill="#425a56"/></svg>
</body></html>
